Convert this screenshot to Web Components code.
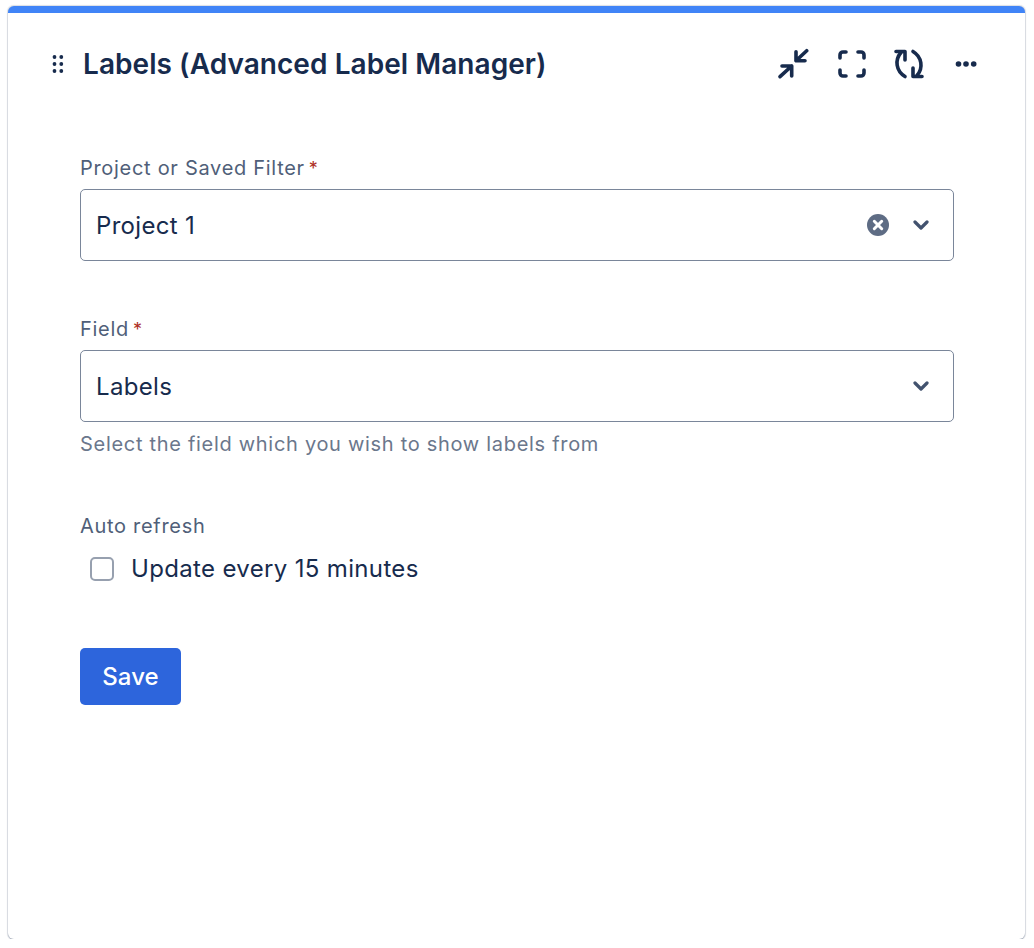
<!DOCTYPE html>
<html>
<head>
<meta charset="utf-8">
<title>Labels</title>
<style>
html, body {
  margin: 0;
  background: #fff;
  font-family: Inter, "Liberation Sans", sans-serif;
  color: #172b4d;
}
body {
  padding: 6px 9px 0 8px;
}
</style>
</head>
<body>
<gadget-card>
  <gadget-header slot="header" title-text="Labels (Advanced Label Manager)"></gadget-header>
  <form-field label="Project or Saved Filter" required>
    <select-box value="Project 1" clearable></select-box>
  </form-field>
  <form-field label="Field" required help="Select the field which you wish to show labels from" class="second">
    <select-box value="Labels"></select-box>
  </form-field>
  <form-field label="Auto refresh" class="third">
    <check-box>Update every 15 minutes</check-box>
  </form-field>
  <save-button>Save</save-button>
</gadget-card>

<script>
class GadgetCard extends HTMLElement {
  connectedCallback() {
    this.attachShadow({mode: 'open'});
    this.shadowRoot.innerHTML = `
      <style>
:host {
  display: flex;
  flex-direction: column;
  box-sizing: border-box;
  height: 933px;
  background: #fff;
  border-top: 7px solid #4084f7;
  border-radius: 6px;
  box-shadow: 0 1px 1px rgba(9, 30, 66, 0.25), 0 0 1px 0.5px rgba(9, 30, 66, 0.14);
}
.body {
  display: flex;
  flex-direction: column;
  align-items: stretch;
  padding: 39px 71px 0 72px;
}
      </style>
      <slot name="header"></slot>
      <div class="body"><slot></slot></div>
    `;
  }
}

class GadgetHeader extends HTMLElement {
  connectedCallback() {
    this.attachShadow({mode: 'open'});
    this.shadowRoot.innerHTML = `
      <style>
:host {
  display: flex;
  align-items: center;
  height: 102px;
  padding: 0 42px 0 43px;
}
.grip {
  width: 14px;
  height: 20px;
  margin-right: 18px;
  flex: none;
}
h1 {
  margin: 0;
  flex: 1;
  font-size: 28px;
  line-height: 32px;
  letter-spacing: 0.06px;
  font-weight: 600;
  color: #172b4d;
}
.tools {
  display: flex;
  align-items: center;
  gap: 26px;
}
.tools svg {
  display: block;
  width: 32px;
  height: 32px;
  fill: none;
  stroke: #172b4d;
  stroke-width: 3.600;
  stroke-linecap: round;
  stroke-linejoin: round;
}
      </style>
      <svg class="grip" viewBox="0 0 14 20" fill="#172b4d">
        <circle cx="3.500" cy="3" r="1.900"/><circle cx="10.300" cy="3" r="1.900"/>
        <circle cx="3.500" cy="10" r="1.900"/><circle cx="10.300" cy="10" r="1.900"/>
        <circle cx="3.500" cy="17" r="1.900"/><circle cx="10.300" cy="17" r="1.900"/>
      </svg>
      <h1>${this.getAttribute('title-text')}</h1>
      <div class="tools">
        <svg viewBox="0 0 32 32">
          <path d="M3 28.700L14.700 18M5 18h9.700v10"/>
          <path d="M29.700 2.700L19 12.700M19 3.700v9h9"/>
        </svg>
        <svg viewBox="0 0 32 32">
          <path d="M11 4H8a3 3 0 0 0-3 3v3M23 4h3a3 3 0 0 1 3 3v3M11 28H8a3 3 0 0 1-3-3v-3M23 28h3a3 3 0 0 0 3-3v-3"/>
        </svg>
        <svg viewBox="0 0 32 32">
          <path d="M12 28.500C3 23 1.500 12 8 4.500"/>
          <path d="M3 3.500h9V12"/>
          <path d="M20 3.500C29 9 30.500 20 24 27.500"/>
          <path d="M29 28.500h-9V20"/>
        </svg>
        <svg viewBox="0 0 32 32" style="stroke:none;fill:#172b4d">
          <circle cx="7.500" cy="16" r="2.800"/><circle cx="15" cy="16" r="2.800"/><circle cx="22.700" cy="16" r="2.800"/>
        </svg>
      </div>
    `;
  }
}

class FormField extends HTMLElement {
  connectedCallback() {
    this.attachShadow({mode: 'open'});
    const help = this.getAttribute('help');
    const star = this.hasAttribute('required') ? '<span class="req">*</span>' : '';
    this.shadowRoot.innerHTML = `
      <style>
:host {
  display: block;
  margin-bottom: 54px;
}
:host(.third) {
  margin-bottom: 63px;
}
label {
  display: block;
  font-size: 20px;
  line-height: 28px;
  letter-spacing: 0.7px;
  margin-bottom: 6px;
  color: #505f79;
}
:host(.third) label {
  margin-bottom: 13px;
}
.req {
  color: #ae2e24;
  margin-left: 4px;
  font-size: 18px;
}
.help {
  margin-top: 8px;
  font-size: 20px;
  line-height: 28px;
  letter-spacing: 0.7px;
  color: #6b778c;
}
      </style>
      <label>${this.getAttribute('label')}${star}</label>
      <slot></slot>
      ${help ? `<div class="help">${help}</div>` : ''}
    `;
  }
}

class SelectBox extends HTMLElement {
  connectedCallback() {
    this.attachShadow({mode: 'open'});
    const clear = this.hasAttribute('clearable') ? `
      <svg class="clear" viewBox="0 0 22 22">
        <circle cx="11" cy="11" r="11" fill="#5e6c84"/>
        <path d="M7.300 7.300l7.400 7.400M14.700 7.300l-7.400 7.400" stroke="#fff" stroke-width="3" stroke-linecap="round"/>
      </svg>` : '';
    this.shadowRoot.innerHTML = `
      <style>
:host {
  display: flex;
  align-items: center;
  box-sizing: border-box;
  height: 72px;
  padding: 0 24px 0 15px;
  border: 1px solid #7a869a;
  border-radius: 5px;
  background: #fff;
}
.value {
  flex: 1;
  font-size: 24px;
  letter-spacing: 0.33px;
  color: #172b4d;
}
.clear {
  width: 22px;
  height: 22px;
  margin-right: 24px;
}
.chev {
  width: 16px;
  height: 10px;
}
      </style>
      <span class="value">${this.getAttribute('value')}</span>
      ${clear}
      <svg class="chev" viewBox="0 0 16 10">
        <path d="M2 2l6 6 6-6" fill="none" stroke="#42526e" stroke-width="3.200" stroke-linecap="round" stroke-linejoin="round"/>
      </svg>
    `;
  }
}

class CheckBox extends HTMLElement {
  connectedCallback() {
    this.attachShadow({mode: 'open'});
    this.shadowRoot.innerHTML = `
      <style>
:host {
  display: flex;
  align-items: center;
  gap: 17px;
  padding-left: 10px;
  font-size: 24px;
  line-height: 32px;
  letter-spacing: 0.34px;
  color: #172b4d;
}
.box {
  box-sizing: border-box;
  width: 24px;
  height: 24px;
  border: 2px solid #97a0af;
  border-radius: 5px;
  background: #fff;
}
      </style>
      <span class="box"></span>
      <span><slot></slot></span>
    `;
  }
}

class SaveButton extends HTMLElement {
  connectedCallback() {
    this.attachShadow({mode: 'open'});
    this.shadowRoot.innerHTML = `
      <style>
:host {
  display: block;
}
button {
  display: block;
  width: 101px;
  height: 57px;
  padding: 0;
  border: 0;
  border-radius: 5px;
  background: #2d65dc;
  color: #fff;
  font: 500 24px Inter, "Liberation Sans", sans-serif;
  letter-spacing: 0.1px;
}
      </style>
      <button><slot></slot></button>
    `;
  }
}

customElements.define('gadget-card', GadgetCard);
customElements.define('gadget-header', GadgetHeader);
customElements.define('form-field', FormField);
customElements.define('select-box', SelectBox);
customElements.define('check-box', CheckBox);
customElements.define('save-button', SaveButton);
</script>
</body>
</html>
